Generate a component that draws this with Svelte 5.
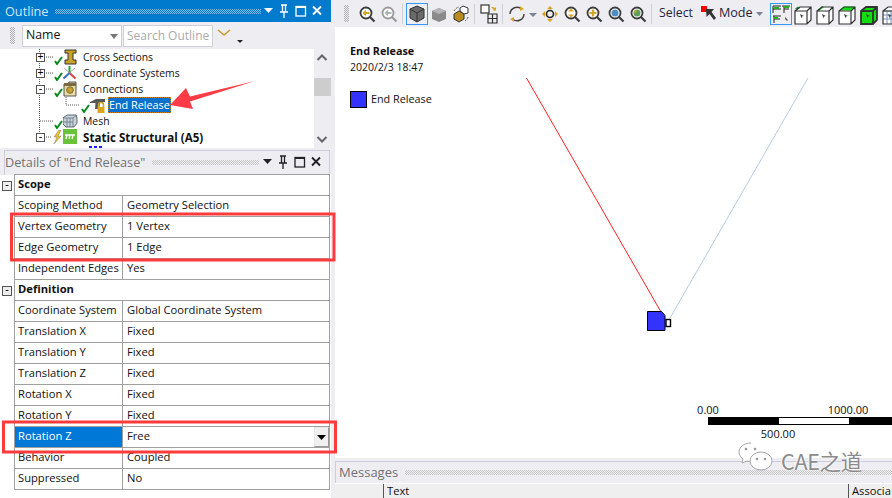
<script>
  const tree = [
    { label: 'Cross Sections', exp: '+', icon: 'beam' },
    { label: 'Coordinate Systems', exp: '+', icon: 'axes' },
    { label: 'Connections', exp: '-', icon: 'folder' },
    { label: 'End Release', icon: 'release', selected: true },
    { label: 'Mesh', icon: 'mesh' },
    { label: 'Static Structural (A5)', exp: '-', icon: 'static', bold: true }
  ];
  const details = [
    { group: 'Scope' },
    { k: 'Scoping Method', v: 'Geometry Selection' },
    { k: 'Vertex Geometry', v: '1 Vertex' },
    { k: 'Edge Geometry', v: '1 Edge' },
    { k: 'Independent Edges', v: 'Yes' },
    { group: 'Definition' },
    { k: 'Coordinate System', v: 'Global Coordinate System' },
    { k: 'Translation X', v: 'Fixed' },
    { k: 'Translation Y', v: 'Fixed' },
    { k: 'Translation Z', v: 'Fixed' },
    { k: 'Rotation X', v: 'Fixed' },
    { k: 'Rotation Y', v: 'Fixed' },
    { k: 'Rotation Z', v: 'Free', active: true },
    { k: 'Behavior', v: 'Coupled' },
    { k: 'Suppressed', v: 'No' }
  ];
  const leadMags = ['#d9a520', '#a8b8b0'];
  const trailMags = ['updown', 'plus', 'blue', 'green'];
  const cubes = ['vertex', 'edge', 'face', 'body', 'mesh'];
</script>

{#snippet winControls()}
  <div class="controls">
    <svg width="58" height="16" viewBox="0 0 58 16">
      <path d="M0 5h9l-4.500 5z" fill="currentColor" />
      <path d="M17 2h6M18.500 2v7h3V2M16 9h8M20 9v6" fill="none" stroke="currentColor" stroke-width="1.300" />
      <rect x="32" y="3.500" width="9.500" height="9.500" fill="none" stroke="currentColor" stroke-width="1.300" />
      <rect x="32" y="3" width="9.500" height="2" fill="currentColor" />
      <path d="M49 3.500l8 8M57 3.500l-8 8" stroke="currentColor" stroke-width="1.800" />
    </svg>
  </div>
{/snippet}

{#snippet mag(color, kind)}
  <svg class="tool" width="22" height="22" viewBox="0 0 22 22">
    <circle cx="10" cy="10" r="5.500" fill="#fff" stroke={color === '#a8b8b0' ? '#9a9a9a' : '#3c3c3c'} stroke-width="1.800" />
    <path d="M14 14l4.500 4.500" stroke={color === '#a8b8b0' ? '#9a9a9a' : '#3c3c3c'} stroke-width="2.200" />
    {#if kind === 'updown'}
      <path d="M10 5.500l3 3H7zM10 14.500l3-3H7z" fill="#d9a520" />
    {:else if kind === 'plus'}
      <path d="M10 6.500v7M6.500 10h7" stroke="#d9a520" stroke-width="2.200" />
    {:else if kind === 'blue'}
      <circle cx="10" cy="10" r="3.500" fill="#4f8fc0" />
    {:else if kind === 'green'}
      <circle cx="10" cy="10" r="3.500" fill="#5aa05a" />
      <circle cx="8.500" cy="8.500" r="1.200" fill="#d9a520" />
    {:else}
      <path d="M6.500 10l3.500-3.500V9h3.500v2H10v2.500z" fill={color} />
    {/if}
  </svg>
{/snippet}

{#snippet cube(kind)}
  <svg class="tool" width="22" height="22" viewBox="0 0 22 22">
    <path d="M3 8l5-4h11v13l-4 4H3z" fill={kind === 'body' ? '#10e010' : '#fff'} />
    {#if kind === 'vertex'}
      <path d="M3 5.500l3-2 2 1.500-3 2z" fill="#20a040" />
    {:else if kind === 'edge'}
      <path d="M3 8l5-5 2 1-5 4z" fill="#10c020" />
    {:else if kind === 'face'}
      <path d="M3.500 7.500L8 3.500h11l-4 4z" fill="#10e010" />
    {:else if kind === 'mesh'}
      <path d="M3 8h12v13M7 8v13M11 8v13M3 12h12M3 16h12" fill="none" stroke="#7090c0" />
    {/if}
    <path d="M3 8l5-4h11v13l-4 4H3zM3 8h12v13M15 8l4-4" fill="none" stroke="#333" stroke-width={kind === 'body' ? 1.800 : 1.200} />
    <path d="M8 11l4 2-2 .500-.500 2z" fill="#444" />
  </svg>
{/snippet}

{#snippet treeIcon(name)}
  <svg width="16" height="16" viewBox="0 0 16 16">
    {#if name === 'beam'}
      <path d="M2 1h11v3H10v7h3v4H2v-4h3V4H2z" fill="#c9a227" stroke="#333" />
    {:else if name === 'axes'}
      <path d="M6.500 8V1" stroke="#22a838" stroke-width="2" />
      <path d="M6.500 8l6 5.500" stroke="#e23b3b" stroke-width="2" />
      <path d="M6.500 8l-6 5.500" stroke="#2a6fd0" stroke-width="2" />
      <path d="M1 3l11 9M12 3L1 12" stroke="#8a8a8a" stroke-width=".7" />
    {:else if name === 'folder'}
      <path d="M1 3h4l1-2h7v14H1z" fill="#e9dca6" stroke="#555" />
      <rect x="1" y="2" width="12" height="3" fill="#7a6a42" />
      <circle cx="7" cy="9" r="3.300" fill="#c9a227" stroke="#7a6a42" />
    {:else if name === 'release'}
      <path d="M0 5l6-3h9v3l-5 1-1 6H5l.500-6H0z" fill="#555" />
      <path d="M8.500 10V8a2.500 2.500 0 015 0v2" fill="none" stroke="#c9a227" stroke-width="1.500" />
      <rect x="7.500" y="10" width="7" height="6" fill="#dba520" />
    {:else if name === 'mesh'}
      <path d="M0 5l4-3h9l1 3v5l-3 4H3l-3-3z" fill="#c7d2dc" stroke="#5f6b75" />
      <path d="M0 5h10l4-3M10 5v9M4 5v9M7 5v9M0 9h10" fill="none" stroke="#5f6b75" stroke-width=".7" />
    {:else}
      <rect x="0" y="0" width="14" height="15" fill="#69c23a" />
      <path d="M2 6h10M4 6l-1 4M7 6L6 10M10 6l-1 4" stroke="#fff" stroke-width="1.300" fill="none" />
    {/if}
  </svg>
{/snippet}

<div class="app">
  <aside class="left">
    <header class="title active">
      <span class="name">Outline</span>
      <span class="grip"></span>
      {@render winControls()}
    </header>

    <div class="outline-tools">
      <span class="vgrip"></span>
      <div class="select">Name<i class="caret"></i></div>
      <div class="search">Search Outline</div>
      <svg class="chev" width="14" height="8" viewBox="0 0 14 8"><path d="M1 1l6 5 6-5" fill="none" stroke="#c99a2e" stroke-width="1.600" /></svg>
      <i class="mini"></i>
    </div>

    <div class="tree-wrap">
      <div class="tree">
        <svg class="guides" width="314" height="99" viewBox="0 0 314 99">
          <path d="M39.500 0V88M44 8h10M44 24h10M44 40h10M40 72h14M44 88h8M66 46V56H80" fill="none" stroke="#555" stroke-dasharray="1 1" />
        </svg>
        {#each tree as row}
          <div class="row" class:deep={row.selected} class:nested={!row.exp && !row.selected}>
            {#if row.exp}
              <span class="exp">{row.exp}</span>
            {/if}
            {#if row.icon === 'static'}
              <svg class="bolt" width="9" height="14" viewBox="0 0 9 14"><path d="M6 0L1 7h3l-3 7 7-8H5l3-6z" fill="#f2c21a" stroke="#777" stroke-width=".5" /></svg>
            {:else}
              <svg class="check" width="9" height="9" viewBox="0 0 9 9"><path d="M1 5l2 3 5-7" fill="none" stroke="#0a8a1e" stroke-width="2" /></svg>
            {/if}
            <span class="ticon">{@render treeIcon(row.icon)}</span>
            <span class="tlabel" class:sel={row.selected} class:b={row.bold}>{row.label}</span>
          </div>
        {/each}
        <svg class="peek" width="16" height="3" viewBox="0 0 16 3"><path d="M0 1h3M5 1h3M10 1h3" stroke="#1c1cff" stroke-width="3" /></svg>
      </div>
      <div class="scroll">
        <svg width="17" height="99" viewBox="0 0 17 99">
          <path d="M3.500 11L8 6.500 12.500 11" fill="none" stroke="#666" stroke-width="2" />
          <rect y="29" width="17" height="18" fill="#cdcdcd" />
          <path d="M3.500 88L8 92.500 12.500 88" fill="none" stroke="#666" stroke-width="2" />
        </svg>
      </div>
    </div>

    <div class="details">
      <header class="title dim">
        <span class="name">Details of "End Release"</span>
        <span class="grip"></span>
        {@render winControls()}
      </header>
      <div class="grid">
        {#each details as d, i}
          {#if d.group}
            <div class="gut"><span class="exp small">-</span></div>
            <div class="cell group" class:first={i === 0}>{d.group}</div>
          {:else}
            <div class="gut"></div>
            <div class="cell key" class:on={d.active}>{d.k}</div>
            <div class="cell val">
              {d.v}
              {#if d.active}
                <span class="drop"><svg width="9" height="5" viewBox="0 0 9 5"><path d="M0 0h9L4.500 5z" fill="#000" /></svg></span>
              {/if}
            </div>
          {/if}
        {/each}
      </div>
    </div>
  </aside>

  <main class="right">
    <div class="toolbar">
      <span class="vgrip"></span>
      {#each leadMags as c}{@render mag(c, '')}{/each}
      <i class="sep"></i>
      <span class="boxed">
        <svg width="22" height="22" viewBox="0 0 22 22"><path d="M11 3l7 3v9l-7 4-7-4V6z" fill="#6a6a6a" stroke="#333" /><path d="M4 6l7 4 7-4M11 10v9" fill="none" stroke="#333" /></svg>
      </span>
      <svg class="tool" width="22" height="22" viewBox="0 0 22 22"><path d="M11 5l7 3v8l-7 3-7-3V8z" fill="#8a8a8a" /><path d="M4 8l7-3 7 3-7 3z" fill="#b5b5b5" /></svg>
      <svg class="tool" width="22" height="22" viewBox="0 0 22 22"><path d="M4 11l5-3 5 3v5l-5 3-5-3z" fill="#b98a1e" stroke="#333" /><path d="M13 3l5 2v5l-4 1-4-3V5z" fill="#fff" stroke="#333" /><path d="M4 8a8 8 0 015-4M18 14a8 8 0 01-3 4" fill="none" stroke="#555" stroke-dasharray="2 1" /></svg>
      <i class="sep"></i>
      <svg class="tool" width="22" height="22" viewBox="0 0 22 22"><rect x="3" y="2" width="8" height="8" fill="#fff" stroke="#333" stroke-width="1.200" /><path d="M10 11h9v9h-9zM14.500 11v9M10 15.500h9" fill="none" stroke="#333" stroke-width="1.200" /><path d="M13 4l3 3-1 1 3-.500V4l-1 1-2-1z" fill="#d9a520" /></svg>
      <i class="sep"></i>
      <svg class="tool" width="22" height="22" viewBox="0 0 22 22"><path d="M4 11a7 7 0 0111-5.500M18 11a7 7 0 01-11 5.500" fill="none" stroke="#444" stroke-width="1.500" /><path d="M14 3l4 3-4 2zM8 14v5l-4-3z" fill="#d9a520" /></svg>
      <svg class="mini-tool" width="11" height="22" viewBox="0 0 11 22"><path d="M1 10h8l-4 4z" fill="#7a8294" /></svg>
      <svg class="tool" width="22" height="22" viewBox="0 0 22 22"><path d="M11 3l3 3H8zM11 19l3-3H8zM3 11l3-3v6zM19 11l-3-3v6z" fill="#d9a520" /><circle cx="11" cy="11" r="3.500" fill="none" stroke="#222" stroke-width="1.600" /></svg>
      {#each trailMags as k}{@render mag('#d9a520', k)}{/each}
      <i class="sep wide"></i>
      <span class="tbtext">Select</span>
      <svg class="cursor" width="16" height="20" viewBox="0 0 16 20"><rect x="0" y="2" width="6" height="6" fill="#ff0000" /><path d="M5 5h8l-2.500 3 4.500 6-2 2-4.500-6-3 3z" fill="#333" /></svg>
      <span class="tbtext mode">Mode</span>
      <svg width="7" height="4" viewBox="0 0 9 5" class="modearrow"><path d="M0 0h9L4.500 5z" fill="#7a8294" /></svg>
      <span class="boxed filter">
        <svg width="22" height="22" viewBox="0 0 22 22"><path d="M3 3h8M3 3v7M3 6h8M12 3h8M14 3v7M14 6h5M3 13h8M4 13v7M4 16h6" fill="none" stroke="#222" /><path d="M4 4h5v2H4zM13 3h6v2h-6zM4 14h4v2H4z" fill="#20b020" /><path d="M15 14l3 3-1 1-2-2z" fill="#555" /></svg>
      </span>
      {#each cubes as c}{@render cube(c)}{/each}
    </div>

    <div class="viewport">
      <div class="legend-head">
        <strong>End Release</strong>
        <span>2020/2/3 18:47</span>
      </div>
      <div class="legend-item"><i class="swatch"></i>End Release</div>

      <svg class="model" width="557" height="431" viewBox="335 27 557 431">
        <path d="M526.500 78L661 312" stroke="#ff2020" stroke-width="1" fill="none" />
        <path d="M808 78L670 318" stroke="#b4cbe6" stroke-width="1" fill="none" />
        <path d="M647.500 311.500h14l3.500 4v15h-17.500z" fill="#3333ff" stroke="#000" />
        <rect x="666" y="319.500" width="4.500" height="7" fill="#fff" stroke="#000" stroke-width="1.400" />
      </svg>

      <div class="scale">
        <span class="tick t0">0.00</span>
        <span class="tick t1">1000.00</span>
        <div class="bar"><i></i></div>
        <span class="tick t2">500.00</span>
      </div>
    </div>

    <div class="messages">
      <header class="msg-title">
        <span class="name">Messages</span>
        <span class="grip"></span>
      </header>
      <div class="msg-cols">
        <span class="col-text">Text</span>
        <span class="col-assoc">Associa</span>
      </div>
    </div>
  </main>

  <svg class="annotation" width="892" height="498" viewBox="0 0 892 498">
    <rect x="11.500" y="214" width="322.500" height="46" fill="none" stroke="#ff3b3b" stroke-width="3" />
    <rect x="3.500" y="422" width="332" height="30" fill="none" stroke="#ff3b3b" stroke-width="3" />
    <path d="M255 81L190 96.500 186 88 170 105 193 109 190 101.500z" fill="#ff3b46" />
  </svg>

  <div class="watermark">
    <svg width="36" height="32" viewBox="0 0 36 32">
      <path d="M14 2c-7 0-12 4-12 9 0 3 2 6 4 7l-1 4 5-2c2 .500 3 .500 4 .500" fill="#fff" stroke="#a5a5a5" />
      <ellipse cx="24" cy="20" rx="11" ry="9" fill="#fff" stroke="#a5a5a5" />
      <circle cx="9" cy="8" r="1.300" fill="#999" /><circle cx="18" cy="8" r="1.300" fill="#999" />
      <circle cx="20" cy="18" r="1.300" fill="#999" /><circle cx="28" cy="18" r="1.300" fill="#999" />
    </svg>
    <span>CAE之道</span>
  </div>
</div>

<style>
  :global(body) { margin: 0; background: #fff; }
  .app {
    position: relative;
    width: 892px;
    height: 498px;
    overflow: hidden;
    display: flex;
    font: 11.200px/1 "Open Sans", "Noto Sans", sans-serif;
    color: #111;
    background: #eeeef2;
  }
  .left { width: 331px; flex: none; display: flex; flex-direction: column; }
  .title { display: flex; align-items: center; height: 22px; padding-left: 5px; }
  .title .name { font-size: 12.700px; white-space: nowrap; }
  .active { background: #007acc; color: #fff; }
  .active .name { color: #cfe6f7; }
  .grip {
    flex: 1;
    height: 5px;
    margin: 0 0 0 7px;
    background-image: conic-gradient(#7fbbe6 25%, transparent 0 50%, #7fbbe6 0 75%, transparent 0);
    background-size: 2px 2px;
  }
  .dim .grip { background-image: conic-gradient(#c8c8c8 25%, transparent 0 50%, #c8c8c8 0 75%, transparent 0); }
  .controls { width: 70px; flex: none; display: flex; justify-content: flex-end; padding-right: 9px; box-sizing: border-box; height: 16px; }
  .active .controls { color: #fff; }
  .dim .controls { color: #222; padding-right: 8px; }
  .outline-tools { display: flex; align-items: center; height: 27px; padding-left: 10px; }
  .vgrip {
    width: 5px;
    height: 17px;
    flex: none;
    background-image: conic-gradient(#b0b0b0 25%, transparent 0 50%, #b0b0b0 0 75%, transparent 0);
    background-size: 2px 2px;
  }
  .select, .search {
    height: 22px;
    box-sizing: border-box;
    border: 1px solid #cfcfd6;
    background: #fff;
    display: flex;
    align-items: center;
  }
  .select { width: 100px; margin-left: 7px; padding-left: 3px; font-size: 12.300px; position: relative; }
  .caret { position: absolute; right: 3px; top: 8px; border: 4px solid transparent; border-top: 5px solid #777; border-bottom: 0; }
  .search { width: 90px; margin-left: 1px; padding-left: 3px; color: #aaa; font-size: 12px; white-space: nowrap; overflow: hidden; }
  .chev { margin-left: 4px; margin-bottom: 5px; }
  .mini { margin: 12px 0 0 6px; border: 3px solid transparent; border-top: 3px solid #222; border-bottom: 0; width: 0; }
  .tree-wrap { display: flex; height: 99px; background: #fff; }
  .tree { position: relative; width: 314px; overflow: hidden; }
  .guides { position: absolute; left: 0; top: 0; }
  .row { position: relative; display: flex; align-items: center; height: 16px; padding-left: 36px; }
  .row.nested { padding-left: 54px; }
  .row.deep { padding-left: 81px; }
  .exp {
    width: 9px;
    height: 9px;
    box-sizing: border-box;
    border: 1px solid #555;
    background: #fff;
    color: #000;
    font: 10px/7px "Liberation Mono", monospace;
    text-align: center;
    flex: none;
    margin-right: 9px;
  }
  .exp.small { margin: 0; width: 10px; height: 10px; line-height: 8px; background: #eee; }
  .check { flex: none; align-self: flex-end; }
  .bolt { flex: none; margin-left: -1px; margin-right: 1px; }
  .ticon { width: 16px; height: 16px; flex: none; margin: 0 3px 0 0; display: block; }
  .row.deep .ticon { margin: 0 2px 0 0; }
  .tlabel { white-space: nowrap; padding: 1px 1px 1px; line-height: 13px; font-size: 10.400px; }
  .sel { background: #0a72cc; color: #fff; outline: 1px dotted #d08000; outline-offset: -1px; padding: 1px 1px 2px; font-size: 10.800px; }
  .b { font-weight: 700; font-size: 11.600px; }
  .peek { position: absolute; left: 89px; top: 97px; }
  .scroll { width: 17px; background: #eeeef2; }
  .scroll svg { display: block; }
  .details { flex: 1; margin-top: 2px; background: #fff; display: flex; flex-direction: column; min-height: 0; }
  .dim {
    background: #eeeef2;
    height: 25px;
    flex: none;
    color: #717171;
    border: solid #ccccdd;
    border-width: 1px 1px 0 1px;
    margin-left: 4px;
    margin-right: 1px;
    padding: 0 0 2px;
    box-sizing: border-box;
    box-shadow: -4px 0 0 #eeeef2, 1px 0 0 #eeeef2;
  }
  .dim .name { color: #717171; }
  .grid {
    display: grid;
    grid-template-columns: 14px 109px 207px;
    grid-auto-rows: 21px;
    flex: none;
  }
  .gut { display: flex; align-items: center; justify-content: center; }
  .cell {
    box-sizing: border-box;
    border: solid #a0a0a0;
    border-width: 0 1px 1px 0;
    display: flex;
    align-items: center;
    padding: 0 0 3px 3px;
    white-space: nowrap;
    background: #fff;
  }
  .key { border-left: 1px solid #a0a0a0; }
  .group { grid-column: 2 / 4; font-weight: 700; border-left: 1px solid #a0a0a0; }
  .group.first { box-shadow: 0 -1px 0 #a0a0a0; }
  .key.on { background: #0078d7; color: #fff; }
  .val { position: relative; padding-left: 4px; }
  .drop {
    position: absolute;
    right: 0;
    top: 0;
    width: 15px;
    height: 20px;
    box-sizing: border-box;
    background: #f0f0f0;
    border: 1px solid #bbb;
    border-color: #e8e8e8 #999 #999 #e8e8e8;
    display: flex;
    align-items: center;
    justify-content: center;
  }
  .right { flex: 1; min-width: 0; display: flex; flex-direction: column; margin-left: 4px; }
  .toolbar { height: 27px; flex: none; display: flex; align-items: center; padding-left: 9px; overflow: hidden; }
  .toolbar .vgrip { margin-right: 7px; }
  .tool { flex: none; display: block; }
  .mini-tool { flex: none; }
  .sep { width: 1px; height: 20px; background: #cfcfd6; margin: 0 3px 0 2px; flex: none; }
  .sep.wide { margin: 0 7px 0 2px; }
  .boxed { width: 22px; height: 22px; box-sizing: border-box; border: 1px solid #3399ff; flex: none; display: flex; align-items: center; justify-content: center; }
  .boxed svg { flex: none; }
  .boxed.filter { margin-left: 7px; }
  .tbtext { font-size: 12.300px; color: #1e1e3c; flex: none; }
  .cursor { margin-left: 8px; flex: none; }
  .mode { margin-left: 2px; font-size: 12.600px; }
  .modearrow { margin-left: 3px; flex: none; }
  .viewport { position: relative; flex: 1; background: #fff; min-height: 0; padding: 17px 0 0 15px; font-size: 10.800px; }
  .legend-head { display: flex; flex-direction: column; gap: 4px; line-height: 13px; }
  .legend-head strong { font-weight: 700; }
  .legend-head span { font-size: 10.500px; }
  .legend-item { display: flex; align-items: center; margin-top: 17px; gap: 4px; }
  .swatch { width: 17px; height: 17px; box-sizing: border-box; background: #3333ff; border: 1px solid #000; display: block; }
  .model { position: absolute; left: 0; top: 0; }
  .scale { position: absolute; left: 373px; top: 377px; width: 184px; height: 40px; }
  .tick { position: absolute; transform: translateX(-50%); white-space: nowrap; font-size: 11px; }
  .t0 { left: 0; top: 0; }
  .t1 { left: 140px; top: 0; }
  .t2 { left: 70px; top: 24px; }
  .bar { position: absolute; left: 0; right: 0; top: 13px; height: 8px; background: #000; }
  .bar i { position: absolute; left: 71px; width: 70px; top: 1px; bottom: 1px; background: #fff; }
  .messages { height: 40px; flex: none; background: #eeeef2; display: flex; flex-direction: column; padding-top: 3px; box-sizing: border-box; }
  .msg-title { height: 22px; flex: none; display: flex; align-items: center; padding-left: 3px; box-sizing: border-box; border: solid #ccccdd; border-width: 1px 0 0 1px; color: #717171; }
  .msg-title .name { font-size: 13px; }
  .msg-title .grip { background-image: conic-gradient(#c8c8c8 25%, transparent 0 50%, #c8c8c8 0 75%, transparent 0); }
  .msg-cols { flex: 1; position: relative; border-top: 1px solid #fff; background: #efeff0; }
  .col-text, .col-assoc { position: absolute; top: 0; bottom: 0; display: flex; align-items: center; padding-left: 3px; border-left: 1px solid #555; white-space: nowrap; }
  .col-text { left: 48px; }
  .col-assoc { left: 513px; }
  .annotation { position: absolute; left: 0; top: 0; pointer-events: none; }
  .watermark { position: absolute; left: 737px; top: 441px; display: flex; align-items: center; gap: 8px; color: #8c8c8c; }
  .watermark span { font: 21.500px/1 "Noto Sans CJK SC", sans-serif; text-shadow: 0 0 2px #fff, 0 0 2px #fff; letter-spacing: -.3px; margin-top: 8px; }
</style>
